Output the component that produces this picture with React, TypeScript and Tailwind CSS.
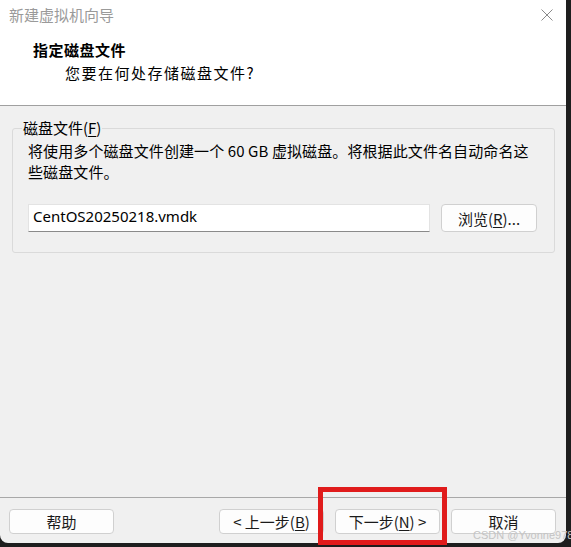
const cjk = { fontFamily: '"Noto Sans CJK SC", "Noto Sans", sans-serif' };
const latin = { fontFamily: '"Noto Sans", "Noto Sans CJK SC", sans-serif' };

function WinButton({ children, wide = true }: { children: React.ReactNode; wide?: boolean }) {
  return (
    <div
      className={`${wide ? 'w-[105px] h-[25px]' : 'w-[96px] h-[28px]'} flex items-center justify-center rounded-[4px] border border-[#d0d0d0] bg-[#fdfdfd] text-[15px] text-[#1a1a1a] leading-none`}
      style={cjk}
    >
      {children}
    </div>
  );
}

export default function App() {
  return (
    <div className="relative w-[571px] h-[547px] bg-[#1e1e1e] overflow-hidden" style={cjk}>
      <div className="w-[566px] h-[543px] bg-[#f0f0f0] flex flex-col rounded-bl-[8px] rounded-br-[8px] overflow-hidden">
        {/* header */}
        <div className="h-[106px] bg-white border-b border-[#a0a0a0] flex flex-col">
          <div className="h-[28px] flex items-center justify-between pl-[9px] pr-[13px] pt-[1px]">
            <span className="text-[15px] text-[#9a9a9a] leading-none">新建虚拟机向导</span>
            <svg width="12" height="12" viewBox="0 0 12 12">
              <path d="M0.5 0.5 L11.5 11.5 M11.5 0.5 L0.5 11.5" stroke="#8a8a8a" strokeWidth="1" fill="none" />
            </svg>
          </div>
          <div className="pl-[33px] pt-[12px] text-[15px] font-bold text-black leading-[20px] tracking-[0.5px]">
            指定磁盘文件
          </div>
          <div className="pl-[65px] pt-[3px] text-[15px] text-black leading-[20px] tracking-[1.5px]">
            您要在何处存储磁盘文件?
          </div>
        </div>

        {/* body */}
        <div className="flex-1 pt-[22px] pl-[12px] pr-[11px]">
          <div className="relative h-[125px] border border-[#dadada] rounded-[3px] pl-[15px] pt-[11px]">
            <span className="absolute left-[9px] top-[-11px] bg-[#f0f0f0] px-[1px] text-[15px] leading-[20px] text-black">
              磁盘文件(<span className="underline underline-offset-2">F</span>)
            </span>
            <p className="text-[15px] leading-[21px] text-black tracking-[0.1px]">
              将使用多个磁盘文件创建一个 60 GB 虚拟磁盘。将根据此文件名自动命名这
              <br />
              些磁盘文件。
            </p>
            <div className="mt-[22px] flex items-center gap-[11px]">
              <div
                className="h-[28px] w-[402px] bg-white border border-[#e3e3e3] border-b-[#8a8a8a] flex items-center pl-[4px] pb-[3px] text-[15px] text-black"
                style={latin}
              >
                CentOS20250218.vmdk
              </div>
              <WinButton wide={false}>
                浏览(<span className="underline underline-offset-2">R</span>)...
              </WinButton>
            </div>
          </div>
        </div>

        {/* footer */}
        <div className="h-[46px] border-t border-[#a8a8a8] flex items-start pt-[11px] pl-[9px] pr-[10px]">
          <WinButton>帮助</WinButton>
          <div className="ml-auto flex gap-[11px]">
            <WinButton>
              &lt; 上一步(<span className="underline underline-offset-2">B</span>)
            </WinButton>
            <WinButton>
              下一步(<span className="underline underline-offset-2">N</span>) &gt;
            </WinButton>
            <WinButton>取消</WinButton>
          </div>
        </div>
      </div>

      {/* annotation highlight */}
      <div className="absolute left-[318px] top-[487px] w-[129px] h-[58px] border-[5px] border-[#e01b1b]" />

      {/* watermark */}
      <div
        className="absolute left-[473px] top-[530px] text-[11px] leading-none text-[#c4c4c4] whitespace-nowrap"
        style={{ fontFamily: '"Liberation Sans", sans-serif' }}
      >
        CSDN @Yvonne978
      </div>
    </div>
  );
}
